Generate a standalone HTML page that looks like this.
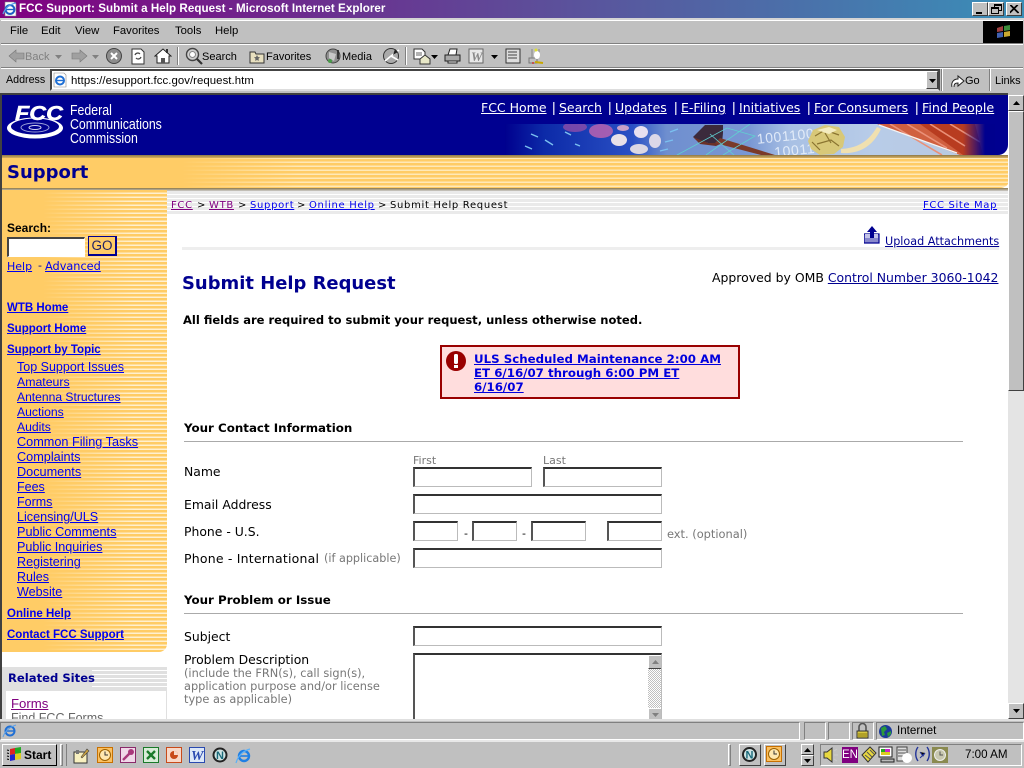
<!DOCTYPE html>
<html><head><meta charset="utf-8"><title>FCC Support: Submit a Help Request - Microsoft Internet Explorer</title>
<style>
html,body{margin:0;padding:0;width:1024px;height:768px;overflow:hidden;background:#c0c0c0}
body{position:relative;font-family:"Liberation Sans",sans-serif;font-size:12px;color:#000}
div,span,a,svg,input{position:absolute;box-sizing:border-box}
.t{white-space:nowrap;line-height:14px}
.v{font-family:"DejaVu Sans",sans-serif}
a{color:#0000ee;text-decoration:underline}
a.vis{color:#800080}
.bd{background:#fff;border:1px solid #bbb;border-top:2px solid #333;border-left:2px solid #555}
.btn{background:#c0c0c0;border:1px solid;border-color:#fff #404040 #404040 #fff}
.sb{font-family:"Liberation Sans",sans-serif;font-size:12.5px}
.sb a{position:absolute;white-space:nowrap;left:17px;line-height:15px}
.bl2{left:5px!important;font-weight:bold;font-size:11.5px}
.g{color:#777}
.hline{height:1px;background:#aaa}
</style></head><body>

<!-- title bar -->
<div style="left:0;top:0;width:1024px;height:18px;background:linear-gradient(90deg,#800080 0%,#5f4a98 50%,#3a8fb8 100%)"></div>
<svg style="left:2px;top:1px" width="16" height="16" viewBox="0 0 16 16"><path d="M3 1h9l2 2v12H3z" fill="#fff" stroke="#888" stroke-width=".6"/><circle cx="8" cy="8.500" r="4.400" fill="none" stroke="#1f5fc4" stroke-width="2"/><path d="M4 8.500h8" stroke="#1f5fc4" stroke-width="1.400"/><path d="M1 13C3 7 8 3 14 2" fill="none" stroke="#5aa0e8" stroke-width="1.200"/></svg>
<span class="t" style="left:19px;top:2px;color:#fff;font-weight:bold;font-size:11.6px;letter-spacing:.05px">FCC Support: Submit a Help Request - Microsoft Internet Explorer</span>
<div class="btn" style="left:972px;top:2px;width:16px;height:14px;font-size:0"><div style="left:3px;top:9px;width:6px;height:2px;background:#000"></div></div>
<div class="btn" style="left:988px;top:2px;width:16px;height:14px"><div style="left:5px;top:1px;width:8px;height:7px;border:1px solid #000;border-top-width:2px"></div><div style="left:2px;top:4px;width:8px;height:7px;border:1px solid #000;border-top-width:2px;background:#c0c0c0"></div></div>
<div class="btn" style="left:1006px;top:2px;width:16px;height:14px"><svg style="left:3px;top:2px" width="9" height="9"><path d="M0 0L8 8M8 0L0 8M1 0L9 8M7 0L-1 8" stroke="#000" stroke-width="1"/></svg></div>

<!-- bars -->
<div style="left:0;top:18px;width:1024px;height:2px;background:#d4d4d4"></div>
<div style="left:1px;top:20px;width:1022px;height:24px;border-top:1px solid #fff;border-bottom:1px solid #808080"></div>
<div style="left:1px;top:44px;width:1022px;height:24px;border-top:1px solid #fff;border-bottom:1px solid #808080"></div>
<div style="left:1px;top:68px;width:1022px;height:25px;border-top:1px solid #fff"></div>
<span class="t" style="left:10px;top:24px;font-size:11.3px">File</span>
<span class="t" style="left:41px;top:24px;font-size:11.3px">Edit</span>
<span class="t" style="left:75px;top:24px;font-size:11.3px">View</span>
<span class="t" style="left:113px;top:24px;font-size:11.3px">Favorites</span>
<span class="t" style="left:175px;top:24px;font-size:11.3px">Tools</span>
<span class="t" style="left:215px;top:24px;font-size:11.3px">Help</span>
<div style="left:983px;top:21px;width:40px;height:22px;background:#000"></div>
<svg style="left:995px;top:24px" width="17" height="15" viewBox="0 0 17 15"><path d="M2 4l6-2v5l-6 1z" fill="#a04040"/><path d="M9 2l6-1v5l-6 1z" fill="#3c8c3c"/><path d="M2 9l6-1v5l-6 1z" fill="#4060b0"/><path d="M9 8l6-1v5l-6 1z" fill="#c8a830"/></svg>

<!-- toolbar -->
<svg style="left:8px;top:48px" width="18" height="16"><path d="M1 8l7-6v3h8v6H8v3z" fill="#a0a0a0" stroke="#777" stroke-width=".6"/></svg>
<span class="t" style="left:25px;top:50px;font-size:11px;color:#808080">Back</span>
<svg style="left:55px;top:55px" width="8" height="5"><path d="M0 0h7L3.500 4z" fill="#808080"/></svg>
<svg style="left:70px;top:48px" width="18" height="16"><path d="M17 8L10 2v3H2v6h8v3z" fill="#a0a0a0" stroke="#777" stroke-width=".6"/></svg>
<svg style="left:92px;top:55px" width="8" height="5"><path d="M0 0h7L3.500 4z" fill="#808080"/></svg>
<svg style="left:105px;top:47px" width="18" height="18"><circle cx="9" cy="9" r="7.500" fill="#8c8c8c" stroke="#444"/><path d="M6 6l6 6M12 6l-6 6" stroke="#fff" stroke-width="2"/></svg>
<svg style="left:129px;top:47px" width="18" height="18"><path d="M3 2h9l3 3v12H3z" fill="#fff" stroke="#333"/><path d="M6 8a3 3 0 0 1 5-1M12 10a3 3 0 0 1-5 1" fill="none" stroke="#444" stroke-width="1.200"/></svg>
<svg style="left:154px;top:47px" width="18" height="18"><path d="M1 9l8-7 8 7h-2v7H3V9z" fill="#fff" stroke="#222"/><rect x="7" y="11" width="4" height="5" fill="#555"/><rect x="12" y="2" width="2" height="4" fill="#333"/></svg>
<div style="left:177px;top:47px;width:2px;height:18px;border-left:1px solid #808080;border-right:1px solid #fff"></div>
<svg style="left:185px;top:47px" width="18" height="18"><circle cx="7.500" cy="7.500" r="6" fill="#d0d0d0" stroke="#444" stroke-width="1.400"/><circle cx="7.500" cy="7.500" r="3" fill="#fff" stroke="#888"/><path d="M12 12l5 5" stroke="#333" stroke-width="2.200"/></svg>
<span class="t" style="left:202px;top:50px;font-size:11px">Search</span>
<svg style="left:249px;top:48px" width="16" height="16"><path d="M1 4h5l1 2h8v9H1z" fill="#e8e0c0" stroke="#333"/><path d="M8 7l1 2 2 .3-1.500 1.400.4 2.200L8 12l-1.900.9.4-2.200L5 9.300 7 9z" fill="#666"/></svg>
<span class="t" style="left:266px;top:50px;font-size:11px">Favorites</span>
<svg style="left:325px;top:47px" width="18" height="18"><circle cx="8" cy="9" r="7" fill="#909090" stroke="#444"/><path d="M4 5l7 2-2 7-5-3z" fill="#c8c8c8"/><circle cx="5" cy="14" r="2" fill="#4a9a4a"/><path d="M13 3v9" stroke="#222" stroke-width="1.600"/></svg>
<span class="t" style="left:342px;top:50px;font-size:11px">Media</span>
<svg style="left:382px;top:47px" width="18" height="18"><circle cx="9" cy="9" r="7.500" fill="#aaa" stroke="#333"/><path d="M9 9L17 3M9 9L3 14M9 9l7 4" stroke="#fff" stroke-width="1.600"/><path d="M13 2l3 3-5 3z" fill="#222"/></svg>
<div style="left:405px;top:47px;width:2px;height:18px;border-left:1px solid #808080;border-right:1px solid #fff"></div>
<svg style="left:413px;top:47px" width="18" height="18"><path d="M1 2h8l3 3v7H1z" fill="#fff" stroke="#333"/><path d="M3 6h6M3 8h6" stroke="#666"/><path d="M7 12l5-4 5 4v5H7z" fill="#e8e8c8" stroke="#333"/></svg>
<svg style="left:431px;top:55px" width="8" height="5"><path d="M0 0h7L3.500 4z" fill="#000"/></svg>
<svg style="left:444px;top:48px" width="17" height="16"><rect x="1" y="7" width="15" height="6" fill="#a8a8a8" stroke="#222"/><path d="M4 7l2-6h7l-1 6zM4 13h9v2H4z" fill="#fff" stroke="#222"/></svg>
<svg style="left:468px;top:47px" width="18" height="18"><rect x="1" y="2" width="14" height="14" fill="#e8e8e8" stroke="#666"/><text x="3" y="14" font-family="Liberation Serif" font-style="italic" font-weight="bold" font-size="13" fill="#888">W</text></svg>
<svg style="left:491px;top:55px" width="8" height="5"><path d="M0 0h7L3.500 4z" fill="#000"/></svg>
<svg style="left:505px;top:48px" width="16" height="16"><rect x="1" y="1" width="14" height="14" fill="#ddd" stroke="#333"/><path d="M3 4h9M3 7h9M3 10h9" stroke="#444"/></svg>
<svg style="left:528px;top:47px" width="18" height="18"><rect x="1" y="11" width="8" height="5" fill="none" stroke="#777"/><path d="M4 2v9M11 2v8" stroke="#888"/><ellipse cx="9" cy="8" rx="3" ry="4" fill="#fff"/><circle cx="8" cy="3" r="1.500" fill="#dd3"/><path d="M7 15l8 1" stroke="#c8a800" stroke-width="2"/><circle cx="5" cy="16" r="1" fill="#c33"/></svg>

<!-- address -->
<span class="t" style="left:6px;top:73px;font-size:10.700px">Address</span>
<div style="left:50px;top:69px;width:890px;height:22px;background:#fff;border:2px solid;border-color:#444 #444 #ddd #444"></div>
<svg style="left:52px;top:72px" width="16" height="16"><path d="M2 1h10l2 2v12H2z" fill="#fff" stroke="#888" stroke-width=".6"/><circle cx="8" cy="8.500" r="4" fill="none" stroke="#1f6fd4" stroke-width="2"/><path d="M4 8.500h8" stroke="#1f6fd4" stroke-width="1.400"/></svg>
<span class="t" style="left:71px;top:74px;font-size:11.400px;letter-spacing:.05px">https://esupport.fcc.gov/request.htm</span>
<div class="btn" style="left:926px;top:71px;width:12px;height:18px"><svg style="left:2px;top:7px" width="7" height="4"><path d="M0 0h7L3.500 4z"/></svg></div>
<div style="left:941px;top:69px;width:2px;height:22px;border-left:1px solid #808080;border-right:1px solid #fff"></div>
<svg style="left:950px;top:72px" width="16" height="17"><path d="M2 15c-1-4 1-8 6-8V4l6 5-6 5v-3c-3 0-4 1-4 4" fill="#fff" stroke="#222"/></svg>
<span class="t" style="left:965px;top:74px;font-size:11px">Go</span>
<div style="left:989px;top:69px;width:2px;height:22px;border-left:1px solid #808080;border-right:1px solid #fff"></div>
<span class="t" style="left:995px;top:74px;font-size:11px">Links</span>

<!-- page -->
<div style="left:0;top:93px;width:1008px;height:626px;background:#fff;overflow:hidden;border-top:2px solid #404040;border-left:2px solid #404040">

 <!-- header -->
 <div style="left:0;top:0;width:1006px;height:60px;background:#000090;border-bottom-right-radius:10px"></div>
 <!-- banner -->
 <svg style="left:503px;top:29px" width="490" height="31" viewBox="0 0 490 31">
  <defs>
   <linearGradient id="b1" x1="0" x2="1" y1="0" y2="0"><stop offset="0" stop-color="#00008e"/><stop offset=".08" stop-color="#0c2aa8"/><stop offset=".26" stop-color="#2a50c4"/><stop offset=".33" stop-color="#6f8fcf"/><stop offset=".5" stop-color="#7a98d4"/><stop offset=".58" stop-color="#a8c0e4"/><stop offset=".75" stop-color="#b8cce8"/><stop offset="1" stop-color="#b8c8e0"/></linearGradient>
   <linearGradient id="b2" x1="0" x2="1" y1="0" y2="0"><stop offset="0" stop-color="#00008e" stop-opacity="0"/><stop offset="1" stop-color="#00008e"/></linearGradient>
  </defs>
  <rect width="490" height="31" fill="url(#b1)"/>
  <ellipse cx="70" cy="3" rx="12" ry="5" fill="#a050a8" opacity=".7"/>
  <ellipse cx="96" cy="7" rx="12" ry="7" fill="#b060b0" opacity=".9"/>
  <ellipse cx="114" cy="16" rx="8" ry="6" fill="#e8e0e8"/><ellipse cx="136" cy="8" rx="7" ry="6" fill="#e8e0f0"/><ellipse cx="134" cy="25" rx="9" ry="5" fill="#dcd8e4"/><ellipse cx="118" cy="4" rx="6" ry="3" fill="#c8a0c8"/><ellipse cx="150" cy="17" rx="6" ry="7" fill="#dcd8e8"/>
  <path d="M26 10l7 3M40 16l8 5M60 8l6 3M20 22l7 3M70 20l5 2M165 8l8-3M160 18l8-2M155 27l8-2" stroke="#7ac0f0" stroke-width="1.400"/>
  <path d="M188 13L200 1h18v8l-1 10h-14l-9-3z" fill="#3b2a3c"/>
  <path d="M188 13l15 6h14l-6 3-16-2z" fill="#6a3028"/>
  <path d="M215 14L270 31h-14l-46-12z" fill="#7a3a2a"/>
  <path d="M172 31L222 4l28 8-32 19M245 0l-44 31M205 10l24 21" fill="none" stroke="#60d0d0" stroke-width=".8"/>
  <g transform="rotate(-6 280 15)" font-family="Liberation Sans" fill="#e8f0fb" opacity=".9"><text x="252" y="17" font-size="14" letter-spacing=".6">1001100</text><text x="268" y="32" font-size="14" letter-spacing=".6">10011</text></g>
  <path d="M303 17l5-11 12-5 14 2 6 10-2 10-9 7-14 1-9-6z" fill="#d8c878"/>
  <path d="M310 12l10-6 14 5M312 20l14-4 8 6M320 9l6 10M307 18l8 8" stroke="#8a7430" stroke-width="1.200" fill="none"/>
  <path d="M312 6l12-3 8 3-8 4z" fill="#f4ecc0"/>
  <path d="M336 25C350 24 362 20 372 3l4 2C366 26 350 30 336 29z" fill="#f0e0b0"/>
  <path d="M372 0h108v31h-25z" fill="#d06040"/>
  <path d="M415 0h55l8 31h-20z" fill="#b83c20"/>
  <path d="M385 0l30 18 22 13M402 0l40 24M425 0l35 22M445 0l30 18" stroke="#ea9078" stroke-width="1.600"/>
  <path d="M374 1l78 28" stroke="#f4f4f4" stroke-width="1.300"/>
  <rect x="458" width="22" height="31" fill="url(#b2)"/>
  <rect x="480" width="10" height="31" fill="#00008e"/>
 </svg>

 <!-- FCC logo -->
 <svg style="left:4px;top:5px" width="62" height="44" viewBox="0 0 62 44">
  <ellipse cx="29" cy="28" rx="28" ry="10.500" fill="#fff"/>
  <ellipse cx="29" cy="26.500" rx="24" ry="8" fill="#000090"/>
  <ellipse cx="29" cy="27.500" rx="14" ry="4.500" fill="none" stroke="#9aa0d8" stroke-width="1"/>
  <ellipse cx="29" cy="27.500" rx="6" ry="2" fill="none" stroke="#d8d8f0" stroke-width="1"/>
  <text x="9" y="20" font-family="Liberation Sans" font-style="italic" font-weight="bold" font-size="20.500" fill="#fff" stroke="#fff" stroke-width=".5" textLength="48" lengthAdjust="spacingAndGlyphs">FCC</text>
 </svg>
 <span class="t" style="left:68px;top:9px;color:#fff;font-size:14.6px;line-height:14px;transform:scaleX(.845);transform-origin:left top">Federal<br>Communications<br>Commission</span>

 <!-- top nav -->
 <div style="left:0;top:0;width:1006px;height:30px">
 <a class="t v" style="left:479px;top:6px;color:#fff;font-size:12.500px">FCC Home</a>
 <a class="t v" style="left:557px;top:6px;color:#fff;font-size:12.500px">Search</a>
 <a class="t v" style="left:613px;top:6px;color:#fff;font-size:12.500px">Updates</a>
 <a class="t v" style="left:679px;top:6px;color:#fff;font-size:12.500px">E-Filing</a>
 <a class="t v" style="left:737px;top:6px;color:#fff;font-size:12.550px">Initiatives</a>
 <a class="t v" style="left:812px;top:6px;color:#fff;font-size:12.550px">For Consumers</a>
 <a class="t v" style="left:920px;top:6px;color:#fff;font-size:12.700px">Find People</a>
 <span class="t" style="left:550px;top:5px;color:#fff;font-size:14px">|</span>
 <span class="t" style="left:606px;top:5px;color:#fff;font-size:14px">|</span>
 <span class="t" style="left:672px;top:5px;color:#fff;font-size:14px">|</span>
 <span class="t" style="left:730px;top:5px;color:#fff;font-size:14px">|</span>
 <span class="t" style="left:805px;top:5px;color:#fff;font-size:14px">|</span>
 <span class="t" style="left:913px;top:5px;color:#fff;font-size:14px">|</span>
 </div>

 <!-- yellow band -->
 <div style="left:0;top:60px;width:1008px;height:33px;background:repeating-linear-gradient(180deg,#ffcc66 0,#ffcc66 2.500px,#ffe9b8 2.500px,#ffe9b8 4px);border-bottom-right-radius:10px;overflow:hidden">
  <div style="left:0;top:0;width:300px;height:33px;background:linear-gradient(90deg,#ffcc66 60%,rgba(255,204,102,0))"></div>
  <div style="left:0;top:0;width:1008px;height:3px;background:linear-gradient(180deg,#8c7848,#d8b060)"></div>
 </div>
 <div style="left:0;top:93px;width:1006px;height:3px;background:linear-gradient(180deg,#8c7848,#ccc)"></div>
 <span class="t v" style="left:5px;top:68px;color:#000090;font-weight:bold;font-size:18px;line-height:20px">Support</span>

 <!-- sidebar -->
 <div style="left:0;top:95px;width:165px;height:462px;background:repeating-linear-gradient(180deg,#ffcc66 0,#ffcc66 2.500px,#fff0d0 2.500px,#fff0d0 4px);border-bottom-right-radius:8px;overflow:hidden">
  <div style="left:0;top:0;width:165px;height:462px;background:linear-gradient(90deg,#ffcc66 25%,rgba(255,204,102,0) 80%)"></div>
 </div>
 <div class="sb" style="left:0;top:0;width:167px;height:560px;">
  <span class="t" style="left:5px;top:126px;font-size:12px;font-weight:bold">Search:</span>
  <div style="left:5px;top:142px;width:78px;height:20px;background:#fff;border:1px solid #fff;border-top:2px solid #444;border-left:2px solid #444"></div>
  <div class="t" style="left:86px;top:141px;width:29px;height:20px;background:#ffcc66;border:1px solid #000090;border-right-width:2px;border-bottom-width:2px;text-align:center;line-height:18px;font-size:13.500px;color:#222266">GO</div>
  <a class="t v" style="left:5px;top:164px;font-size:11px;left:5px">Help</a>
  <span class="t v" style="left:36px;top:164px;font-size:11px;color:#000090">-</span>
  <a class="t v" style="left:43px;top:164px;font-size:11.300px">Advanced</a>
 </div>
 <div class="sb" style="left:0;top:-95px;width:167px;height:800px;margin:0">
  <a class="bl2" style="top:301px">WTB Home</a>
  <a class="bl2" style="top:322px">Support Home</a>
  <a class="bl2" style="top:343px">Support by Topic</a>
  <a style="left:15px;top:360px">Top Support Issues</a>
  <a style="left:15px;top:375px;font-size:12.300px">Amateurs</a>
  <a style="left:15px;top:390px;font-size:12.100px">Antenna Structures</a>
  <a style="left:15px;top:405px;font-size:12.200px">Auctions</a>
  <a style="left:15px;top:420px;font-size:12.200px">Audits</a>
  <a style="left:15px;top:435px;font-size:12.700px">Common Filing Tasks</a>
  <a style="left:15px;top:450px;font-size:12.700px">Complaints</a>
  <a style="left:15px;top:465px;font-size:12.700px">Documents</a>
  <a style="left:15px;top:480px">Fees</a>
  <a style="left:15px;top:495px">Forms</a>
  <a style="left:15px;top:510px;font-size:12.600px">Licensing/ULS</a>
  <a style="left:15px;top:525px;font-size:12.700px">Public Comments</a>
  <a style="left:15px;top:540px;font-size:12.600px">Public Inquiries</a>
  <a style="left:15px;top:555px;font-size:12.600px">Registering</a>
  <a style="left:15px;top:570px">Rules</a>
  <a style="left:15px;top:585px;font-size:12.600px">Website</a>
  <a class="bl2" style="top:607px">Online Help</a>
  <a class="bl2" style="top:628px">Contact FCC Support</a>
 </div>

 <!-- related sites -->
 <div style="left:0;top:572px;width:165px;height:60px;background:#e0e0e0">
  <div style="left:90px;top:0;width:75px;height:22px;background:repeating-linear-gradient(180deg,#e0e0e0 0,#e0e0e0 3px,#fff 3px,#fff 4px)"></div>
  <div style="left:4px;top:24px;width:160px;height:40px;background:#fff"></div>
 </div>
 <span class="t v" style="left:6px;top:576px;color:#000090;font-weight:bold;font-size:11.600px">Related Sites</span>
 <a class="t vis" style="left:9px;top:602px;font-size:13.200px">Forms</a>
 <span class="t" style="left:9px;top:616px;font-size:12.500px;color:#666">Find FCC Forms</span>

 <!-- breadcrumb band -->
 <div style="left:165px;top:96px;width:841px;height:24px;background:repeating-linear-gradient(180deg,#eaeaea 0,#eaeaea 3px,#fff 3px,#fff 4px)"></div>
 <div class="t v" style="left:169px;top:104px;font-size:10px;letter-spacing:.68px;white-space:nowrap;position:absolute">
 <a class="t vis" style="left:0;top:0">FCC</a><span class="t" style="left:26px;top:0">&gt;</span><a class="t vis" style="left:38px;top:0">WTB</a><span class="t" style="left:67px;top:0">&gt;</span><a class="t" style="left:79px;top:0">Support</a><span class="t" style="left:126px;top:0">&gt;</span><a class="t" style="left:138px;top:0">Online Help</a><span class="t" style="left:207px;top:0">&gt;</span><span class="t" style="left:219px;top:0">Submit Help Request</span>
 </div>
 <a class="t v" style="left:921px;top:104px;font-size:10px;letter-spacing:.64px">FCC Site Map</a>

 <!-- upload -->
 <div style="left:180px;top:152px;width:817px;height:3px;background:#eee"></div>
 <svg style="left:862px;top:131px" width="16" height="18" viewBox="0 0 16 18"><path d="M0 8h15v9H0z" fill="#8888cc" stroke="#000090" stroke-width="1.200"/><path d="M1 8h13v4H1z" fill="#c4c4e8"/><path d="M8 0l5 6h-3v6H6V6H3z" fill="#000090"/></svg>
 <a class="t v" style="left:883px;top:140px;font-size:11.200px;color:#000090">Upload Attachments</a>

 <span class="t v" style="left:180px;top:179px;color:#000090;font-weight:bold;font-size:17.950px;line-height:20px">Submit Help Request</span>
 <span class="t v" style="left:710px;top:176px;font-size:12.450px">Approved by OMB <a style="position:static;color:#000090">Control Number 3060-1042</a></span>
 <span class="t v" style="left:181px;top:218px;font-size:11.520px;font-weight:bold">All fields are required to submit your request, unless otherwise noted.</span>

 <!-- alert -->
 <div style="left:438px;top:250px;width:300px;height:54px;background:#ffdddd;border:2px solid #990000"></div>
 <svg style="left:443px;top:255px" width="22" height="22" viewBox="0 0 22 22"><circle cx="11" cy="11" r="10" fill="#990000"/><rect x="9" y="4" width="4" height="10" rx="1.500" fill="#fff"/><rect x="9" y="15" width="4" height="3" fill="#fff"/></svg>
 <a class="t v" style="left:472px;top:257px;font-weight:bold;font-size:11.800px;line-height:14px;color:#0000dd">ULS Scheduled Maintenance 2:00 AM<br>ET 6/16/07 through 6:00 PM ET<br>6/16/07</a>

 <!-- form -->
 <span class="t v" style="left:182px;top:326px;font-weight:bold;font-size:11.850px">Your Contact Information</span>
 <div class="hline" style="left:182px;top:346px;width:779px"></div>
 <span class="t v" style="left:182px;top:370px;font-size:12.400px">Name</span>
 <span class="t v g" style="left:411px;top:359px;font-size:11px">First</span>
 <span class="t v g" style="left:541px;top:359px;font-size:11px">Last</span>
 <div class="bd" style="left:411px;top:372px;width:119px;height:20px"></div>
 <div class="bd" style="left:541px;top:372px;width:119px;height:20px"></div>
 <span class="t v" style="left:182px;top:403px;font-size:12.400px">Email Address</span>
 <div class="bd" style="left:411px;top:399px;width:249px;height:20px"></div>
 <span class="t v" style="left:182px;top:430px;font-size:12.400px">Phone - U.S.</span>
 <div class="bd" style="left:411px;top:426px;width:45px;height:20px"></div>
 <span class="t v" style="left:462px;top:432px;font-size:11px">-</span>
 <div class="bd" style="left:470px;top:426px;width:45px;height:20px"></div>
 <span class="t v" style="left:520px;top:432px;font-size:11px">-</span>
 <div class="bd" style="left:529px;top:426px;width:55px;height:20px"></div>
 <div class="bd" style="left:605px;top:426px;width:55px;height:20px"></div>
 <span class="t v g" style="left:665px;top:432px;font-size:11.400px">ext. (optional)</span>
 <span class="t v" style="left:182px;top:457px;font-size:12.500px;letter-spacing:.2px">Phone - International</span>
 <span class="t v g" style="left:322px;top:457px;font-size:11.200px">(if applicable)</span>
 <div class="bd" style="left:411px;top:453px;width:249px;height:20px"></div>

 <span class="t v" style="left:182px;top:498px;font-weight:bold;font-size:11.850px">Your Problem or Issue</span>
 <div class="hline" style="left:182px;top:518px;width:779px"></div>
 <span class="t v" style="left:182px;top:535px;font-size:12.400px">Subject</span>
 <div class="bd" style="left:411px;top:531px;width:249px;height:20px"></div>
 <span class="t v" style="left:182px;top:558px;font-size:12.400px">Problem Description</span>
 <span class="t v g" style="left:182px;top:572px;font-size:11.350px;line-height:13px">(include the FRN(s), call sign(s),<br>application purpose and/or license<br>type as applicable)</span>
 <div class="bd" style="left:411px;top:558px;width:249px;height:80px;overflow:hidden">
  <div style="left:233px;top:0;width:14px;height:80px;background:repeating-conic-gradient(#c0c0c0 0 25%,#fff 0 50%) 0 0/2px 2px"></div>
  <div class="btn" style="left:233px;top:0;width:14px;height:14px"><svg style="left:3px;top:4px" width="7" height="4"><path d="M0 4h7L3.500 0z" fill="#808080"/></svg></div>
  <div class="btn" style="left:233px;top:53px;width:14px;height:14px"><svg style="left:3px;top:4px" width="7" height="4"><path d="M0 0h7L3.500 4z" fill="#808080"/></svg></div>
 </div>
</div>

<!-- page scrollbar -->
<div style="left:1008px;top:95px;width:16px;height:624px;background:#e4e4e4;border-bottom:1px solid #808080"></div>
<div class="btn" style="left:1008px;top:95px;width:16px;height:16px"><svg style="left:4px;top:5px" width="7" height="4"><path d="M0 4h7L3.500 0z"/></svg></div>
<div class="btn" style="left:1008px;top:111px;width:16px;height:280px"></div>
<div class="btn" style="left:1008px;top:703px;width:16px;height:16px"><svg style="left:4px;top:5px" width="7" height="4"><path d="M0 0h7L3.500 4z"/></svg></div>

<!-- status bar -->
<div style="left:0;top:719px;width:1024px;height:2px;background:#e0e0e0"></div>
<div style="left:0;top:721px;width:1024px;height:19px;background:#c0c0c0"></div>
<div style="left:0;top:722px;width:800px;height:18px;border:1px solid;border-color:#808080 #fff #fff #808080"></div>
<svg style="left:2px;top:723px" width="16" height="16"><circle cx="8" cy="8" r="4.500" fill="none" stroke="#1f6fd4" stroke-width="2"/><path d="M4 8h8" stroke="#1f6fd4" stroke-width="1.400"/><path d="M1 14C3 8 8 4 14 2" fill="none" stroke="#5aa0e8"/></svg>
<div style="left:804px;top:722px;width:22px;height:18px;border:1px solid;border-color:#808080 #fff #fff #808080"></div>
<div style="left:828px;top:722px;width:22px;height:18px;border:1px solid;border-color:#808080 #fff #fff #808080"></div>
<div style="left:852px;top:722px;width:22px;height:18px;border:1px solid;border-color:#808080 #fff #fff #808080"></div>
<svg style="left:855px;top:723px" width="15" height="16" viewBox="0 0 15 16"><path d="M4 8V4a3.500 3.500 0 0 1 7 0v4" fill="none" stroke="#555" stroke-width="1.600"/><rect x="2" y="8" width="11" height="7" fill="#d8c840" stroke="#333"/><path d="M3 11h9M3 13h9" stroke="#8a7a10"/></svg>
<div style="left:876px;top:722px;width:148px;height:18px;border:1px solid;border-color:#808080 #fff #fff #808080"></div>
<svg style="left:878px;top:724px" width="15" height="15"><circle cx="7.500" cy="7.500" r="6.500" fill="#1a3a9a"/><path d="M3 4l4-2 2 3-3 3 1 3-3 1zM9 9l4-2v3l-3 3z" fill="#2a9a3a"/></svg>
<span class="t" style="left:897px;top:724px;font-size:11.600px">Internet</span>

<!-- taskbar -->
<div style="left:0;top:740px;width:1024px;height:28px;background:#c0c0c0;border-top:2px solid #e8e8e8"></div>
<div class="btn" style="left:2px;top:744px;width:55px;height:22px;border-color:#fff #000 #000 #fff"></div>
<svg style="left:6px;top:747px" width="17" height="15" viewBox="0 0 17 15"><path d="M1 3l2 .5M1 6l2 .5M1 9l2 .5M1 12l2 .5" stroke="#000" stroke-width="1"/><path d="M4 2l5-1v6l-5 1z" fill="#d22"/><path d="M9 1l6-1v6l-6 1z" fill="#2a2"/><path d="M4 8l5-1v6l-5 1z" fill="#22c"/><path d="M9 7l6-1v6l-6 1z" fill="#dc2"/></svg>
<span class="t" style="left:24px;top:748px;font-weight:bold;font-size:12px">Start</span>
<div style="left:60px;top:744px;width:3px;height:22px;border:1px solid;border-color:#fff #808080 #808080 #fff"></div>
<div style="left:66px;top:744px;width:1px;height:22px;background:#808080"></div>
<svg style="left:73px;top:747px" width="17" height="17"><rect x="1" y="5" width="13" height="11" fill="#f8f0c0" stroke="#333"/><rect x="3" y="3" width="3" height="4" fill="#777"/><path d="M8 10l6-8 2 2-7 7z" fill="#c8a040" stroke="#444" stroke-width=".6"/></svg>
<svg style="left:97px;top:747px" width="17" height="17"><rect x=".5" y=".5" width="15" height="15" fill="#fbc060" stroke="#c87000"/><circle cx="8" cy="8" r="5.500" fill="#ffe8b0" stroke="#9a6000"/><path d="M8 4.500V8h3" stroke="#333" fill="none"/></svg>
<svg style="left:120px;top:747px" width="17" height="17"><rect x=".5" y=".5" width="15" height="15" fill="#f0d8e8" stroke="#8a2a6a"/><circle cx="11" cy="5" r="3" fill="#a8387a"/><path d="M10 6L3 13" stroke="#a8387a" stroke-width="2.400"/></svg>
<svg style="left:143px;top:747px" width="17" height="17"><rect x=".5" y=".5" width="15" height="15" fill="#d8ecd8" stroke="#1a7a2a"/><path d="M4 4l8 8M12 4l-8 8" stroke="#1a7a2a" stroke-width="2.400"/></svg>
<svg style="left:166px;top:747px" width="17" height="17"><rect x=".5" y=".5" width="15" height="15" fill="#f8d8c8" stroke="#c84a1a"/><circle cx="8" cy="8" r="4" fill="#c84a1a"/><path d="M8 8V4a4 4 0 0 1 4 4z" fill="#f8d8c8"/></svg>
<svg style="left:189px;top:747px" width="17" height="17"><rect x=".5" y=".5" width="15" height="15" fill="#dce8f8" stroke="#2a4ab0"/><text x="2" y="13" font-family="Liberation Serif" font-style="italic" font-weight="bold" font-size="14" fill="#2a4ab0">W</text></svg>
<svg style="left:212px;top:747px" width="17" height="17"><circle cx="8" cy="8" r="7.500" fill="#222"/><circle cx="8" cy="8" r="5.500" fill="#cfe4e4"/><text x="4" y="12" font-family="Liberation Sans" font-weight="bold" font-size="11" fill="#1a6a7a">N</text></svg>
<svg style="left:235px;top:747px" width="17" height="17"><circle cx="9" cy="9" r="5" fill="none" stroke="#1f7fe4" stroke-width="2.400"/><path d="M5 9h8" stroke="#1f7fe4" stroke-width="1.600"/><path d="M1 16C3 9 8 4 15 2" fill="none" stroke="#5ab0f8" stroke-width="1.200"/></svg>

<div style="left:728px;top:744px;width:3px;height:22px;border:1px solid;border-color:#fff #808080 #808080 #fff"></div>
<div class="btn" style="left:739px;top:744px;width:22px;height:22px"></div>
<svg style="left:741px;top:746px" width="17" height="17"><circle cx="8.500" cy="8.500" r="7.500" fill="#222"/><circle cx="8.500" cy="8.500" r="5.500" fill="#cfe4e4"/><text x="4.500" y="12.500" font-family="Liberation Sans" font-weight="bold" font-size="11" fill="#1a6a7a">N</text></svg>
<div class="btn" style="left:764px;top:744px;width:22px;height:22px"></div>
<svg style="left:766px;top:746px" width="17" height="17"><rect x=".5" y=".5" width="15" height="15" fill="#fbc060" stroke="#c87000"/><circle cx="8" cy="8" r="5.500" fill="#ffe8b0" stroke="#9a6000"/><path d="M8 4.500V8h3" stroke="#333" fill="none"/></svg>
<div class="btn" style="left:801px;top:744px;width:13px;height:11px;border-color:#fff #404040 #404040 #fff"><svg style="left:2px;top:3px" width="7" height="4"><path d="M0 4h7L3.500 0z"/></svg></div>
<div class="btn" style="left:801px;top:755px;width:13px;height:11px"><svg style="left:2px;top:3px" width="7" height="4"><path d="M0 0h7L3.500 4z"/></svg></div>
<div style="left:820px;top:744px;width:202px;height:22px;border:1px solid;border-color:#808080 #fff #fff #808080"></div>
<svg style="left:823px;top:746px" width="18" height="18"><path d="M1 6h3l5-4v14l-5-4H1z" fill="#e8d840" stroke="#333"/><path d="M11 5l3-2M11 9h4M11 13l3 2" stroke="#ccc"/></svg>
<div class="t" style="left:842px;top:747px;width:16px;height:16px;background:#800080;color:#fff;font-size:11.500px;line-height:16px;text-align:center">EN</div>
<svg style="left:861px;top:746px" width="16" height="18"><path d="M1 9l8-8 6 6-8 9z" fill="#e8d840" stroke="#333"/><path d="M6 6l5 5M4 9l5 4M9 4l4 4" stroke="#555"/></svg>
<svg style="left:878px;top:746px" width="17" height="18"><rect x="1" y="1" width="13" height="10" fill="#fff" stroke="#222"/><path d="M3 3h4v3H3z" fill="#2a2"/><path d="M7 3h5v3H7z" fill="#c2c"/><path d="M3 6h9v3H3z" fill="#dc2"/><rect x="3" y="13" width="13" height="3" fill="#bbb" stroke="#222"/></svg>
<svg style="left:896px;top:746px" width="17" height="18"><rect x="1" y="1" width="10" height="14" fill="#ddd" stroke="#444"/><path d="M2 4h8M2 7h8M2 10h8" stroke="#555"/><circle cx="11" cy="12" r="5" fill="#fff"/></svg>
<svg style="left:914px;top:746px" width="17" height="18"><path d="M4 1C1 5 1 11 4 15M13 1c3 4 3 10 0 14" fill="none" stroke="#223399" stroke-width="1.400"/><path d="M6 6l3 4 2-3M6 12l5-5" stroke="#223399"/></svg>
<svg style="left:932px;top:747px" width="16" height="16"><rect width="16" height="16" fill="#8a8a50"/><circle cx="8" cy="8" r="5.500" fill="#c8c8b0" stroke="#eee"/><path d="M8 4.500V8h3" stroke="#555" fill="none"/></svg>
<span class="t" style="left:965px;top:748px;font-size:11.600px">7:00 AM</span>
</body></html>
